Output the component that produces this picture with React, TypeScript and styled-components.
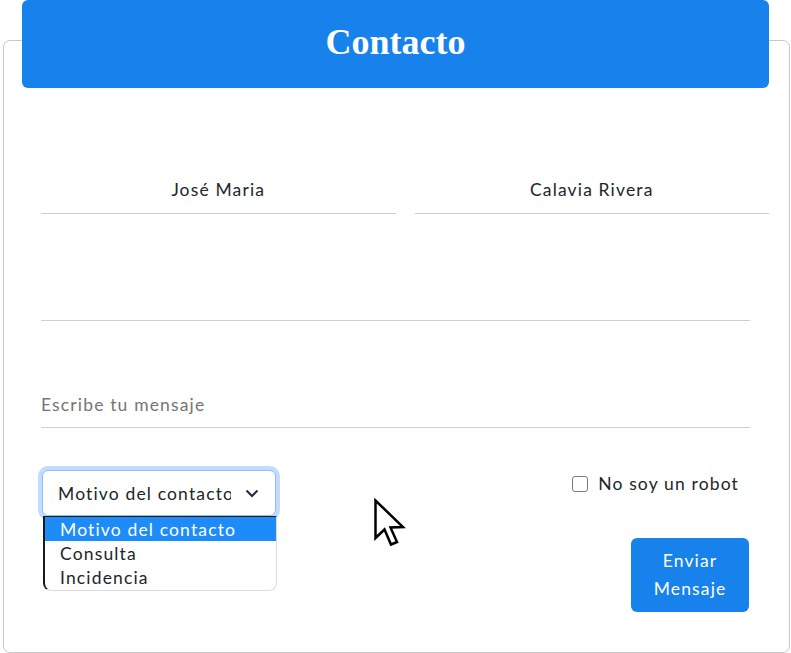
import React from "react";
import styled, { createGlobalStyle } from "styled-components";

const GlobalStyle = createGlobalStyle`
  html, body { margin: 0; padding: 0; background: #ffffff; }
  body { font-family: "Lato", "Noto Sans", sans-serif; color: #212529; }
  * { box-sizing: border-box; }
`;

const Page = styled.div`
  padding: 40px 1px 0 3px;
  height: 653px;
  overflow: hidden;
  position: relative;
`;

const Card = styled.div`
  border: 1px solid #c8c8cc;
  border-radius: 7px;
  height: 613px;
  display: flex;
  flex-direction: column;
`;

const Header = styled.header`
  margin: -41px 20px 0 18px;
  height: 88px;
  padding-bottom: 4px;
  background: #1782ec;
  border-radius: 6px;
  display: flex;
  align-items: center;
  justify-content: center;
`;

const Title = styled.h1`
  margin: 0;
  font-family: "Liberation Serif", "DejaVu Serif", serif;
  font-weight: 700;
  font-size: 36px;
  color: #ffffff;
`;

const Form = styled.form`
  padding: 85px 20px 0 37px;
  display: flex;
  flex-direction: column;
  letter-spacing: 1.15px;
`;

const NameRow = styled.div`
  display: grid;
  grid-template-columns: 1fr 1fr;
  column-gap: 19px;
`;

const LineInput = styled.input<{ $center?: boolean; $gapTop?: number; $narrow?: boolean }>`
  display: block;
  width: ${(p) => (p.$narrow ? "calc(100% - 19px)" : "100%")};
  height: 41px;
  margin-top: ${(p) => p.$gapTop ?? 0}px;
  border: none;
  border-bottom: 1px solid #cfcfd2;
  outline: none;
  background: transparent;
  font-family: "Lato", "Noto Sans", sans-serif;
  font-size: 17.5px;
  letter-spacing: 1.15px;
  color: #212529;
  text-align: ${(p) => (p.$center ? "center" : "left")};
  padding: 0 0 ${(p) => (p.$narrow ? 6 : 8)}px 0;
  &::placeholder { color: #757575; }
`;

const BottomRow = styled.div`
  display: flex;
  justify-content: space-between;
  align-items: flex-start;
  margin-top: 42px;
  margin-right: 20px;
`;

const SelectWrap = styled.div`
  position: relative;
  margin-left: 1px;
`;

const SelectBox = styled.div`
  width: 234px;
  height: 46px;
  border: 1px solid #8fbdf8;
  border-radius: 6px;
  box-shadow: 0 0 0 4px #c3dbfc;
  display: flex;
  align-items: center;
  justify-content: space-between;
  padding: 0 16px 0 15px;
  font-size: 17.5px;
  color: #212529;
  background: #fff;
`;

const SelectText = styled.span`
  width: 173px;
  overflow: hidden;
  white-space: nowrap;
`;

const OptionList = styled.ul`
  position: absolute;
  left: 1px;
  top: 46px;
  width: 234px;
  margin: 0;
  padding: 0 0 1px 0;
  list-style: none;
  background: #fff;
  border: 1px solid #dcdce0;
  border-left: 2px solid #1a1a1a;
  border-top: 1px solid #1a1a1a;
  border-radius: 0 0 8px 8px;
  overflow: hidden;
`;

const OptionItem = styled.li<{ $active?: boolean }>`
  height: 24px;
  line-height: 26px;
  padding-left: 15px;
  font-size: 17.5px;
  white-space: nowrap;
  color: ${(p) => (p.$active ? "#ffffff" : "#212529")};
  background: ${(p) => (p.$active ? "#1e8cf8" : "transparent")};
`;

const RightCol = styled.div`
  display: flex;
  flex-direction: column;
  align-items: flex-end;
`;

const CheckLabel = styled.label`
  display: flex;
  align-items: center;
  gap: 10px;
  margin-top: 3px;
  margin-right: 10px;
  font-size: 17.5px;
  color: #212529;
`;

const Box = styled.span`
  width: 16px;
  height: 16px;
  border: 1px solid #7b7b7b;
  border-radius: 3px;
  background: #fff;
`;

const SendButton = styled.button`
  margin-top: 44px;
  width: 118px;
  height: 74px;
  border: none;
  border-radius: 6px;
  background: #1782ec;
  color: #fff;
  font-family: "Lato", "Noto Sans", sans-serif;
  font-size: 17.5px;
  letter-spacing: 1.15px;
  line-height: 28px;
  padding: 0 10px;
`;

const Cursor = styled.svg`
  position: absolute;
  left: 373px;
  top: 498px;
`;

export default function App() {
  return (
    <>
      <GlobalStyle />
      <Page>
        <Card>
          <Header>
            <Title>Contacto</Title>
          </Header>
          <Form onSubmit={(e) => e.preventDefault()}>
            <NameRow>
              <LineInput $center defaultValue="José Maria" />
              <LineInput $center defaultValue="Calavia Rivera" />
            </NameRow>
            <LineInput $narrow $gapTop={66} />
            <LineInput $narrow $gapTop={66} placeholder="Escribe tu mensaje" />
            <BottomRow>
              <SelectWrap>
                <SelectBox>
                  <SelectText>Motivo del contacto</SelectText>
                  <svg width="14" height="9" viewBox="0 0 14 9">
                    <path d="M1.5 1.5 L7 7 L12.5 1.5" fill="none" stroke="#2b2540" strokeWidth="2" />
                  </svg>
                </SelectBox>
                <OptionList>
                  <OptionItem $active>Motivo del contacto</OptionItem>
                  <OptionItem>Consulta</OptionItem>
                  <OptionItem>Incidencia</OptionItem>
                </OptionList>
              </SelectWrap>
              <RightCol>
                <CheckLabel>
                  <Box />
                  No soy un robot
                </CheckLabel>
                <SendButton type="submit">Enviar Mensaje</SendButton>
              </RightCol>
            </BottomRow>
          </Form>
        </Card>
        <Cursor width="34" height="50" viewBox="0 0 13.6 20">
          <path d="M1 1 L1 16 L4.6 12.6 L7.2 18.6 L9.6 17.6 L7 11.8 L12 11.6 Z" fill="#fff" stroke="#000" strokeWidth="1" strokeLinejoin="miter" />
        </Cursor>
      </Page>
    </>
  );
}
